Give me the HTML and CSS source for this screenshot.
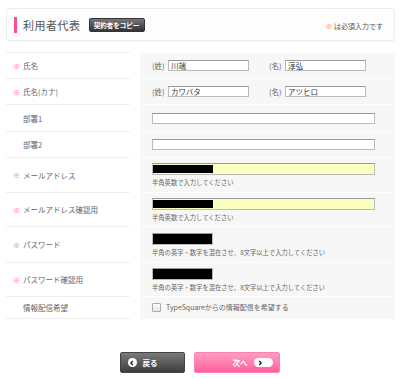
FILE: index.html
```html
<!DOCTYPE html>
<html lang="ja">
<head>
    <meta charset="UTF-8">
    <title>利用者代表</title>
    <link rel="stylesheet" href="styles.css">
</head>
<body>
    <div class="page">
        <div class="section-head">
            <div class="title-wrap">
                <h2 class="title">利用者代表</h2>
                <button class="copy-btn">契約者をコピー</button>
            </div>
            <p class="required-note"><span class="req">※</span> は必須入力です</p>
        </div>

        <div class="form">
            <div class="row h26">
                <div class="label"><span class="req">※</span>氏名</div>
                <div class="field">
                    <span class="pre">(姓)</span><input class="in name" value="川端">
                    <span class="pre pre2">(名)</span><input class="in name" value="淳弘">
                </div>
            </div>
            <div class="row h26">
                <div class="label"><span class="req">※</span>氏名(カナ)</div>
                <div class="field">
                    <span class="pre">(姓)</span><input class="in name" value="カワバタ">
                    <span class="pre pre2">(名)</span><input class="in name" value="アツヒロ">
                </div>
            </div>
            <div class="row h27">
                <div class="label"><span class="req blank"></span>部署1</div>
                <div class="field"><input class="in wide"></div>
            </div>
            <div class="row h26">
                <div class="label"><span class="req blank"></span>部署2</div>
                <div class="field"><input class="in wide"></div>
            </div>
            <div class="row h35">
                <div class="label"><span class="req">※</span>メールアドレス</div>
                <div class="field stack">
                    <div class="in wide yellow"><span class="mask m60"></span></div>
                    <p class="hint">半角英数で入力してください</p>
                </div>
            </div>
            <div class="row h34">
                <div class="label"><span class="req">※</span>メールアドレス確認用</div>
                <div class="field stack">
                    <div class="in wide yellow"><span class="mask m60"></span></div>
                    <p class="hint">半角英数で入力してください</p>
                </div>
            </div>
            <div class="row h36">
                <div class="label"><span class="req">※</span>パスワード</div>
                <div class="field stack">
                    <div class="in pass"><span class="mask full"></span></div>
                    <p class="hint">半角の英字・数字を混在させ、8文字以上で入力してください</p>
                </div>
            </div>
            <div class="row h34">
                <div class="label"><span class="req">※</span>パスワード確認用</div>
                <div class="field stack">
                    <div class="in pass"><span class="mask full"></span></div>
                    <p class="hint">半角の英字・数字を混在させ、8文字以上で入力してください</p>
                </div>
            </div>
            <div class="row h23">
                <div class="label"><span class="req blank"></span>情報配信希望</div>
                <div class="field">
                    <label class="check"><span class="box"></span>TypeSquareからの情報配信を希望する</label>
                </div>
            </div>
        </div>

        <div class="actions">
            <button class="btn back">
                <span class="circle"><svg width="6" height="6" viewBox="0 0 6 6"><path d="M3.8 1 L1.9 3 L3.8 5" fill="none" stroke="#222" stroke-width="1.4"/></svg></span>
                戻る
            </button>
            <button class="btn next">
                次へ
                <span class="pill"><svg width="6" height="6" viewBox="0 0 6 6"><path d="M2.2 1 L4.1 3 L2.2 5" fill="none" stroke="#222" stroke-width="1.4"/></svg></span>
            </button>
        </div>
    </div>
</body>
</html>
```
FILE: styles.css
```css
body {
    margin: 0;
    background-color: #fff;
    font-family: "Noto Sans CJK JP", "Noto Sans", sans-serif;
    color: #666;
}
.page {
    width: 389px;
    padding: 8px 5px 0 6px;
}
.section-head {
    height: 31px;
    border: 1px solid #eee;
    border-radius: 3px;
    background-color: #fdfdfd;
    box-shadow: 0 1px 1px rgba(0,0,0,0.03);
    display: flex;
    justify-content: space-between;
    align-items: center;
}
.title-wrap {
    display: flex;
    align-items: center;
}
.title {
    margin: 0 0 0 7px;
    padding-left: 6px;
    border-left: 3px solid #ff4f93;
    font-size: 11px;
    line-height: 16px;
    font-weight: normal;
    color: #555;
    letter-spacing: 0.5px;
}
.copy-btn {
    flex: none;
    box-sizing: border-box;
    margin-left: 8px;
    width: 56px;
    height: 14px;
    padding: 0;
    border: 1px solid #333;
    border-radius: 2px;
    background: linear-gradient(#777, #333);
    color: #fff;
    font-family: inherit;
    font-size: 6.5px;
    line-height: 12px;
    font-weight: bold;
    text-align: center;
}
.required-note {
    margin: 2px 11px 0 0;
    font-size: 7px;
    color: #555;
}
.req {
    display: inline-block;
    width: 10px;
    color: #ff6f7f;
    font-size: 7px;
}
.required-note .req {
    width: auto;
}
.form {
    margin-top: 11px;
}
.row {
    display: grid;
    grid-template-columns: 124px 255px;
    column-gap: 10px;
}
.h26 { height: 26px; }
.h27 { height: 27px; }
.h35 { height: 35px; }
.h34 { height: 34px; }
.h36 { height: 36px; }
.h23 { height: 23px; }
.label {
    border-top: 1px solid #eee;
    padding-left: 7px;
    display: flex;
    align-items: center;
    font-size: 7.5px;
    color: #666;
}
.row:last-child .label {
    border-bottom: 1px solid #eee;
}
.field {
    background-color: #f7f7f7;
    border-top: 1px solid #fff;
    padding-left: 12px;
    display: flex;
    align-items: center;
    font-size: 7.5px;
}
.field.stack {
    flex-direction: column;
    align-items: flex-start;
    justify-content: center;
}
.pre {
    width: 16px;
    color: #666;
}
.pre2 {
    margin-left: 20px;
}
.in {
    box-sizing: border-box;
    height: 11px;
    margin: 0;
    padding: 0 2px;
    border: 1px solid #bbb;
    border-top-color: #999;
    background-color: #fff;
    font-family: inherit;
    font-size: 7.5px;
    color: #333;
    outline: none;
}
.name {
    width: 81px;
}
.wide {
    width: 223px;
}
.yellow {
    height: 12px;
    padding: 0;
    background-color: #fbffc0;
    display: flex;
    align-items: center;
}
.pass {
    width: 61px;
    height: 12px;
    padding: 0;
    display: flex;
}
.mask {
    display: block;
    height: 8px;
    background-color: #000;
}
.m60 {
    width: 60px;
}
.full {
    width: 100%;
    height: 100%;
}
.hint {
    margin: 3px 0 0;
    font-size: 6.3px;
    color: #666;
}
.check {
    display: flex;
    align-items: center;
    color: #666;
    font-size: 7px;
    margin-top: -2px;
}
.box {
    width: 7px;
    height: 7px;
    margin-right: 5px;
    border: 1px solid #aaa;
    border-radius: 1px;
    background: linear-gradient(#fff, #e4e4e4);
}
.actions {
    margin-top: 33px;
    display: flex;
    justify-content: center;
    gap: 9px;
    padding-right: 2px;
}
.btn {
    height: 21px;
    padding: 0;
    border-radius: 2px;
    font-family: inherit;
    font-size: 7.5px;
    font-weight: bold;
    color: #fff;
    display: flex;
    align-items: center;
}
.back {
    width: 65px;
    border: 1px solid #444;
    background: linear-gradient(#7a7a7a, #3e3e3e);
    padding-left: 7px;
    gap: 6px;
}
.next {
    width: 86px;
    border: 1px solid #ff7fae;
    background: linear-gradient(#ffa0c4, #ff5f9d);
    justify-content: flex-end;
    padding-right: 6px;
    gap: 6px;
}
.circle {
    width: 9px;
    height: 9px;
    border-radius: 50%;
    background-color: #fff;
    display: flex;
    align-items: center;
    justify-content: center;
}
.pill {
    width: 19px;
    height: 9px;
    border-radius: 5px;
    background-color: #fff;
    display: flex;
    align-items: center;
    padding-left: 3px;
    box-sizing: border-box;
}
```
